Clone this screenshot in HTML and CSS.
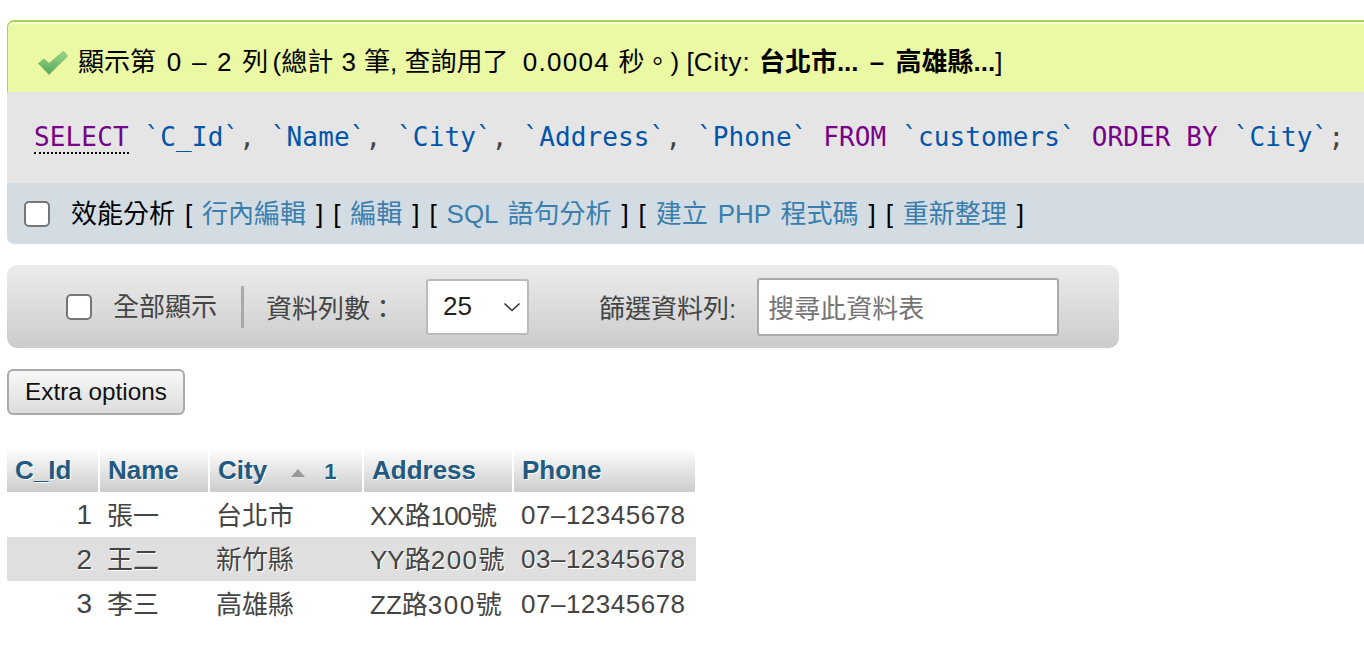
FILE: index.html
```html
<!DOCTYPE html>
<html>
<head>
    <title>customers</title>
    <meta charset="utf-8">
    <link rel="stylesheet" href="styles.css">
</head>
<body>
<div class="result">
    <div class="message">
        <svg class="check" width="30" height="24" viewBox="0 0 30 24">
            <defs>
                <linearGradient id="checkFill" x1="0" y1="0" x2="0" y2="1">
                    <stop offset="0" stop-color="#9ad88a"/>
                    <stop offset="1" stop-color="#55a65a"/>
                </linearGradient>
            </defs>
            <path d="M0.500 12.500 L6 8 L11 12.500 L25.500 0.500 L29.500 5 L11 23.500 Z" fill="url(#checkFill)" stroke="#6fb56c" stroke-width="0.800"/>
        </svg>
        <span><span class="wide">顯示第 0 – 2 </span><span class="narrow">列 (</span><span class="slight">總計 3 筆</span>, 查詢用了<span class="wider"> <span class="digits">0.0004</span> </span>秒。) [<span class="city">City: </span><b class="range">台北市... – 高雄縣...</b>]</span>
    </div>
    <div class="sql">
        <code><span class="kw dotted">SELECT</span> <span class="id">`C_Id`</span>, <span class="id">`Name`</span>, <span class="id">`City`</span>, <span class="id">`Address`</span>, <span class="id">`Phone`</span> <span class="kw">FROM</span> <span class="id">`customers`</span> <span class="kw">ORDER BY</span> <span class="id">`City`</span>;</code>
    </div>
    <div class="tools">
        <span class="box"></span>
        <span class="tool-links">效能分析 [ <a href="#">行內編輯</a> ] [ <a href="#">編輯</a> ] [ <a href="#">SQL 語句分析</a> ] [ <a href="#">建立 PHP 程式碼</a> ] [ <a href="#">重新整理</a> ]</span>
    </div>
</div>

<div class="navbar">
    <span class="box"></span>
    <span class="show-all">全部顯示</span>
    <span class="rows-label">資料列數：</span>
    <span class="select">25
        <svg width="18" height="10" viewBox="0 0 18 10"><path d="M1.500 1.500 L9 8.500 L16.500 1.500" fill="none" stroke="#333" stroke-width="1.600"/></svg>
    </span>
    <span class="filter-label">篩選資料列:</span>
    <span class="search">搜尋此資料表</span>
</div>

<button class="extra" type="button">Extra options</button>

<table class="data">
    <colgroup>
        <col class="col-id"><col class="col-name"><col class="col-city"><col class="col-address"><col class="col-phone">
    </colgroup>
    <thead>
        <tr>
            <th>C_Id</th>
            <th>Name</th>
            <th>City <span class="sort"></span><span class="sort-num">1</span></th>
            <th>Address</th>
            <th>Phone</th>
        </tr>
    </thead>
    <tbody>
        <tr><td class="num">1</td><td class="name">張一</td><td>台北市</td><td>XX路<span class="tight">100</span>號</td><td class="phone">07–12345678</td></tr>
        <tr class="even"><td class="num">2</td><td class="name">王二</td><td>新竹縣</td><td>YY路<span class="loose">200</span>號</td><td class="phone">03–12345678</td></tr>
        <tr><td class="num">3</td><td class="name">李三</td><td>高雄縣</td><td>ZZ路<span class="loose">300</span>號</td><td class="phone">07–12345678</td></tr>
    </tbody>
</table>
</body>
</html>
```

FILE: styles.css
```css
html, body {
    margin: 0;
    overflow: hidden;
}

body {
    height: 652px;
    padding: 20px 0 0 7px;
    box-sizing: border-box;
    font-family: "Liberation Sans", "Noto Sans CJK TC", sans-serif;
    font-size: 26px;
    color: #000;
}

a {
    color: #3a7ead;
    text-decoration: none;
}

.result {
    width: 1357px;
}

.message {
    display: flex;
    align-items: center;
    gap: 10px;
    height: 72px;
    box-sizing: border-box;
    padding: 4px 0 0 30px;
    background: #ebf8a4;
    border-top: 2px solid #a9d34f;
    border-left: 1px solid #a9d34f;
    border-top-left-radius: 7px;
    box-shadow: inset 0 2px 0 #f6fcd0;
}

.check {
    margin-top: 7px;
}

.wide {
    word-spacing: 3.500px;
}

.narrow {
    word-spacing: -3px;
}

.slight {
    word-spacing: 1px;
}

.wider {
    word-spacing: 6px;
}

.digits {
    margin: 0 -4.800px 0 1px;
    letter-spacing: 1.300px;
}

.city {
    letter-spacing: 1px;
}

.range {
    word-spacing: 4px;
}

.sql {
    display: flex;
    align-items: center;
    height: 91px;
    padding: 0 0 2px 27px;
    box-sizing: border-box;
    background: #e5e5e5;
    white-space: nowrap;
}

.sql code {
    font-family: "DejaVu Sans Mono", monospace;
    font-size: 26px;
    letter-spacing: 0.130px;
    color: #444;
}

.kw {
    color: #770088;
}

.id {
    color: #0055aa;
}

.dotted {
    border-bottom: 2px dotted #000;
}

.tools {
    display: flex;
    align-items: center;
    gap: 21px;
    height: 61px;
    padding-left: 17px;
    box-sizing: border-box;
    background: #d3dce3;
    border-bottom-left-radius: 7px;
}

.tool-links {
    padding-bottom: 4px;
    word-spacing: 2.700px;
}

.box {
    display: block;
    flex: none;
    width: 26px;
    height: 26px;
    box-sizing: border-box;
    background: #fff;
    border: 2px solid #767676;
    border-radius: 5px;
}

.navbar {
    display: flex;
    align-items: center;
    width: 1112px;
    height: 83px;
    box-sizing: border-box;
    margin-top: 21px;
    padding-left: 59px;
    color: #444;
    background: linear-gradient(#ececec, #cccccc);
    border-radius: 10px;
}

.show-all {
    margin-left: 21px;
    padding-right: 24px;
    margin-right: 22px;
    line-height: 42px;
    border-right: 3px solid #aaa;
}

.select {
    display: flex;
    align-items: center;
    justify-content: space-between;
    width: 103px;
    height: 56px;
    box-sizing: border-box;
    margin-left: 30px;
    padding: 0 6px 0 15px;
    color: #222;
    background: #fff;
    border: 2px solid #bbb;
    border-radius: 3px;
}

.filter-label {
    margin-left: 70px;
}

.search {
    display: flex;
    align-items: center;
    width: 302px;
    height: 58px;
    box-sizing: border-box;
    margin-left: 21px;
    padding-left: 9px;
    color: #757575;
    background: #fff;
    border: 2px solid #aaa;
    border-radius: 3px;
}

.extra {
    display: block;
    width: 178px;
    height: 46px;
    padding: 0;
    margin-top: 21px;
    font: inherit;
    font-size: 24.300px;
    color: #111;
    background: linear-gradient(#f8f8f8, #dcdcdc);
    border: 2px solid #aaa;
    border-radius: 6px;
}

.data {
    margin-top: 33px;
    width: 689px;
    table-layout: fixed;
    border-collapse: collapse;
    color: #444;
    text-shadow: 1px 1px 0 #fff;
}

.col-id { width: 92px; }
.col-name { width: 110px; }
.col-city { width: 154px; }
.col-address { width: 150px; }
.col-phone { width: 183px; }

.data th {
    height: 44px;
    padding: 0 0 0 8px;
    text-align: left;
    font-weight: bold;
    color: #235a81;
    background: linear-gradient(#fff, #cccccc);
    border-right: 2px solid #fff;
}

.data td {
    height: 44.500px;
    padding: 0 0 2px 7px;
    box-sizing: border-box;
    white-space: nowrap;
}

.data td.name {
    padding-left: 8px;
}

.data td.num {
    padding: 2px 7px 0 0;
    text-align: right;
    font-size: 28px;
}

.data td.phone {
    padding: 2px 0 0 8px;
    letter-spacing: 0.500px;
}

.tight {
    letter-spacing: -1px;
}

.loose {
    letter-spacing: 1.500px;
}

.even td {
    background: #dfdfdf;
}

.sort {
    display: inline-block;
    width: 0;
    height: 0;
    margin-left: 17px;
    vertical-align: 2px;
    border-left: 7px solid transparent;
    border-right: 7px solid transparent;
    border-bottom: 8px solid #999;
}

.sort-num {
    margin-left: 19px;
    font-size: 22px;
}
```
